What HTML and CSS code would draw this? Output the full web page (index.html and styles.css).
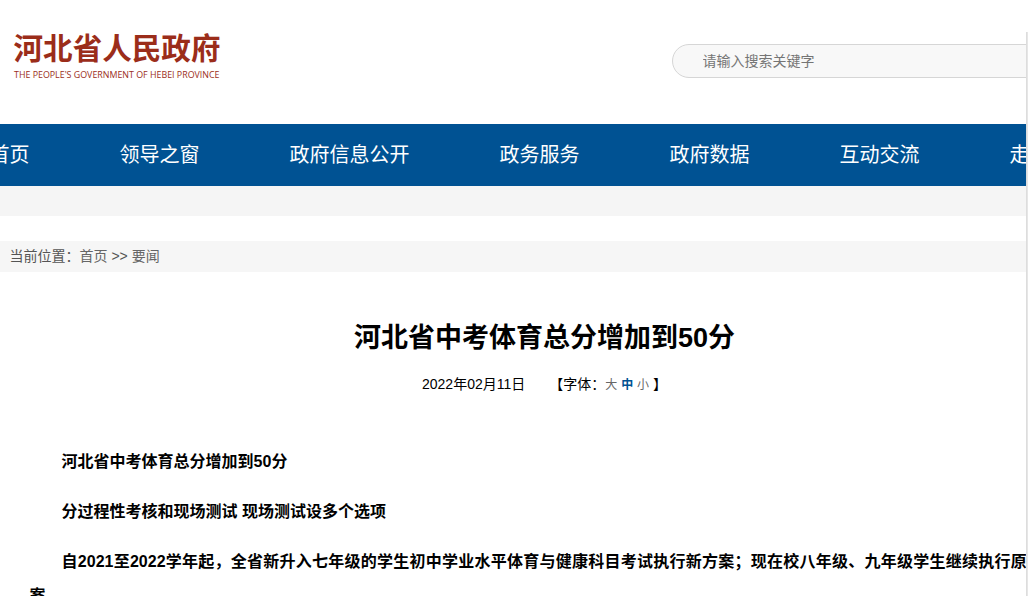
FILE: index.html
```html
<!DOCTYPE html>
<html lang="zh-CN">
  <head>
    <meta charset="UTF-8" />
    <meta name="viewport" content="width=device-width, initial-scale=1.0" />
    <title>河北省中考体育总分增加到50分</title>
    <link rel="stylesheet" href="styles.css">
  </head>
  <body>
    <div class="page">
      <header class="header">
        <a class="logo" href="#">
          <svg width="240" height="80" viewBox="0 0 240 80">
            <text class="logo-cn" x="13.5" y="39" textLength="207" lengthAdjust="spacingAndGlyphs">河北省人民政府</text>
            <text class="logo-en" x="14" y="58" textLength="205.5" lengthAdjust="spacingAndGlyphs">THE PEOPLE'S GOVERNMENT OF HEBEI PROVINCE</text>
          </svg>
        </a>
        <form class="search">
          <input type="text" placeholder="请输入搜索关键字" />
        </form>
      </header>

      <nav class="nav">
        <a href="#">首页</a>
        <a href="#">领导之窗</a>
        <a href="#">政府信息公开</a>
        <a href="#">政务服务</a>
        <a href="#">政府数据</a>
        <a href="#">互动交流</a>
        <a href="#">走进河北</a>
      </nav>
      <div class="strip"></div>

      <div class="crumbs">当前位置：<a href="#">首页</a> &gt;&gt; <a href="#">要闻</a></div>

      <div class="article">
        <h1>河北省中考体育总分增加到50分</h1>
        <div class="info">
          <span class="date">2022年02月11日</span>
          <span>【字体：<a href="#">大</a> <a href="#" class="on">中</a> <a href="#">小</a> 】</span>
        </div>
        <div class="content">
          <p>河北省中考体育总分增加到50分</p>
          <p>分过程性考核和现场测试 现场测试设多个选项</p>
          <p>自2021至2022学年起，全省新升入七年级的学生初中学业水平体育与健康科目考试执行新方案；现在校八年级、九年级学生继续执行原方案</p>
        </div>
      </div>
    </div>
    <div class="edge"></div>
  </body>
</html>
```

FILE: styles.css
```css
body {
  margin: 0;
  display: flex;
  height: 100vh;
  overflow: hidden;
  background-color: #fff;
  color: #000;
  font-family: "Liberation Sans", "Noto Sans CJK SC", sans-serif;
  font-size: 14px;
}

a {
  color: #666;
  text-decoration: none;
}

.page {
  flex: 1;
  min-width: 0;
  overflow: hidden;
}

/* thin line down the right side */
.edge {
  width: 1px;
  margin: 32px 0 0;
  background-color: #ddd;
  border-right: 1px solid #e6e6e6;
}

.header {
  display: flex;
  justify-content: space-between;
  align-items: flex-start;
  width: 1089.5px;
  height: 124px;
}

.logo {
  margin-top: 20px;
}

.logo svg {
  display: block;
}

.logo text {
  fill: #9b2d1a;
}

.logo-cn {
  font-family: "Noto Sans CJK SC", sans-serif;
  font-size: 30px;
  font-weight: bold;
}

.logo-en {
  font-family: "Open Sans", sans-serif;
  font-size: 9px;
  font-weight: 500;
}

.search {
  width: 418px;
  margin-top: 44px;
}

.search input {
  width: 100%;
  height: 34px;
  padding: 0 30px;
  box-sizing: border-box;
  border: 1px solid #d6d6d6;
  border-radius: 17px;
  background-color: #f8f8f8;
  font-family: inherit;
  font-size: 14px;
}

.search input::placeholder {
  color: #757575;
}

.nav {
  display: flex;
  gap: 90px;
  height: 62px;
  margin-left: -10.6px;
  background-color: #005293;
}

.nav a {
  flex: none;
  color: #fff;
  font-size: 20px;
  line-height: 62px;
}

.strip {
  height: 30px;
  background-color: #f5f5f5;
}

.crumbs {
  height: 31px;
  margin-top: 25px;
  padding-left: 9.5px;
  background-color: #f6f6f6;
  color: #555;
  line-height: 31px;
}

.article {
  width: 1089px;
}

h1 {
  margin: 0;
  padding-top: 46px;
  font-size: 27px;
  line-height: 40px;
  text-align: center;
}

.info {
  display: flex;
  justify-content: center;
  margin-top: 16px;
  line-height: 20px;
}

.date {
  margin-right: 24px;
}

.info a {
  font-size: 12px;
}

.info .on {
  color: #005293;
  font-weight: bold;
}

.content {
  padding: 50px 46px 0 29.6px;
  font-size: 16px;
  font-weight: bold;
  line-height: 34px;
  text-align: justify;
}

.content p {
  margin: 0 0 16px;
  text-indent: 2em;
}
```
